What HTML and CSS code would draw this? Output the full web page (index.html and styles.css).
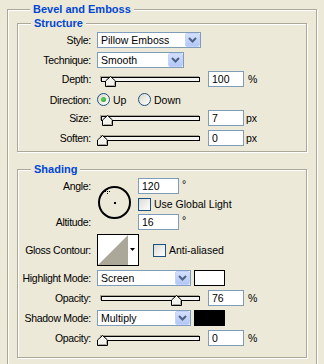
FILE: index.html
```html
<!DOCTYPE html>
<html lang="en">
<head>
    <meta charset="UTF-8">
    <title>Bevel and Emboss</title>
    <link rel="stylesheet" href="styles.css">
</head>
<body>
    <div class="panel">
        <div class="group outer">
            <div class="legend">Bevel and Emboss</div>

            <div class="group structure">
                <div class="legend">Structure</div>
                <div class="rows">
                    <div class="row">
                        <span class="label">Style:</span>
                        <div class="select w-style"><span class="value">Pillow Emboss</span><span class="drop"><svg width="9" height="6" viewBox="0 0 9 6"><polyline points="1,1 4.5,4.5 8,1" fill="none" stroke="#4D6185" stroke-width="2"/></svg></span></div>
                    </div>
                    <div class="row mt4">
                        <span class="label">Technique:</span>
                        <div class="select w-tech"><span class="value">Smooth</span><span class="drop"><svg width="9" height="6" viewBox="0 0 9 6"><polyline points="1,1 4.5,4.5 8,1" fill="none" stroke="#4D6185" stroke-width="2"/></svg></span></div>
                    </div>
                    <div class="row mt3">
                        <span class="label">Depth:</span>
                        <div class="slider"><div class="track"></div><svg class="thumb" style="left: 8px" width="11" height="11" viewBox="0 0 11 11"><polygon points="0.5,10.5 0.5,5 5.5,0.5 10.5,5 10.5,10.5" fill="#F4F3EE" stroke="#000"/><polyline points="1.5,9.5 9.5,9.5 9.5,5.5" fill="none" stroke="#ACA899"/></svg></div>
                        <div class="field">100</div><span class="unit">%</span>
                    </div>
                    <div class="row mt4 tall">
                        <span class="label">Direction:</span>
                        <span class="opt up"><span class="radio checked"></span>Up</span>
                        <span class="opt"><span class="radio"></span>Down</span>
                    </div>
                    <div class="row mt2">
                        <span class="label">Size:</span>
                        <div class="slider"><div class="track"></div><svg class="thumb" style="left: 5px" width="11" height="11" viewBox="0 0 11 11"><polygon points="0.5,10.5 0.5,5 5.5,0.5 10.5,5 10.5,10.5" fill="#F4F3EE" stroke="#000"/><polyline points="1.5,9.5 9.5,9.5 9.5,5.5" fill="none" stroke="#ACA899"/></svg></div>
                        <div class="field">7</div><span class="unit px">px</span>
                    </div>
                    <div class="row mt4">
                        <span class="label">Soften:</span>
                        <div class="slider"><div class="track"></div><svg class="thumb" style="left: 0px" width="11" height="11" viewBox="0 0 11 11"><polygon points="0.5,10.5 0.5,5 5.5,0.5 10.5,5 10.5,10.5" fill="#F4F3EE" stroke="#000"/><polyline points="1.5,9.5 9.5,9.5 9.5,5.5" fill="none" stroke="#ACA899"/></svg></div>
                        <div class="field">0</div><span class="unit px">px</span>
                    </div>
                </div>
            </div>

            <div class="group shading">
                <div class="legend">Shading</div>
                <div class="rows bottom">
                    <div class="angle-block">
                        <div class="label stack">
                            <span class="stack-item">Angle:</span>
                            <span class="stack-item">Altitude:</span>
                        </div>
                        <svg class="dial" width="35" height="35" viewBox="0 0 35 35">
                            <circle cx="17.5" cy="17.5" r="15.5" fill="none" stroke="#000" stroke-width="2"/>
                            <rect x="17" y="17" width="2" height="2" fill="#000"/>
                            <g fill="#000">
                                <rect x="10" y="4" width="1" height="1"/>
                                <rect x="10" y="8" width="1" height="1"/>
                                <rect x="8" y="6" width="1" height="1"/>
                                <rect x="12" y="6" width="1" height="1"/>
                                <rect x="10" y="6" width="1" height="1"/>
                            </g>
                        </svg>
                        <div class="stack-right">
                            <div class="row"><div class="field wide">120</div><span class="deg">°</span></div>
                            <div class="row"><span class="check"></span><span class="check-text">Use Global Light</span></div>
                            <div class="row"><div class="field wide">16</div><span class="deg">°</span></div>
                        </div>
                    </div>
                    <div class="row mt4 contour-row">
                        <span class="label">Gloss Contour:</span>
                        <svg class="contour" width="42" height="32" viewBox="0 0 42 32">
                            <rect x="0.5" y="0.5" width="41" height="31" fill="#fff" stroke="#000"/>
                            <polygon points="1,31 31,1 31,31" fill="#ACA899"/>
                            <polygon points="33,14 38,14 35.5,17" fill="#000"/>
                        </svg>
                        <span class="check aa"></span><span class="check-text">Anti-aliased</span>
                    </div>
                    <div class="row mt4">
                        <span class="label">Highlight Mode:</span>
                        <div class="select w-mode"><span class="value">Screen</span><span class="drop"><svg width="9" height="6" viewBox="0 0 9 6"><polyline points="1,1 4.5,4.5 8,1" fill="none" stroke="#4D6185" stroke-width="2"/></svg></span></div>
                        <span class="swatch white"></span>
                    </div>
                    <div class="row mt4">
                        <span class="label">Opacity:</span>
                        <div class="slider"><div class="track"></div><svg class="thumb" style="left: 74px" width="11" height="11" viewBox="0 0 11 11"><polygon points="0.5,10.5 0.5,5 5.5,0.5 10.5,5 10.5,10.5" fill="#F4F3EE" stroke="#000"/><polyline points="1.5,9.5 9.5,9.5 9.5,5.5" fill="none" stroke="#ACA899"/></svg></div>
                        <div class="field">76</div><span class="unit">%</span>
                    </div>
                    <div class="row mt4">
                        <span class="label">Shadow Mode:</span>
                        <div class="select w-mode"><span class="value">Multiply</span><span class="drop"><svg width="9" height="6" viewBox="0 0 9 6"><polyline points="1,1 4.5,4.5 8,1" fill="none" stroke="#4D6185" stroke-width="2"/></svg></span></div>
                        <span class="swatch black"></span>
                    </div>
                    <div class="row mt4">
                        <span class="label">Opacity:</span>
                        <div class="slider"><div class="track"></div><svg class="thumb" style="left: 0px" width="11" height="11" viewBox="0 0 11 11"><polygon points="0.5,10.5 0.5,5 5.5,0.5 10.5,5 10.5,10.5" fill="#F4F3EE" stroke="#000"/><polyline points="1.5,9.5 9.5,9.5 9.5,5.5" fill="none" stroke="#ACA899"/></svg></div>
                        <div class="field">0</div><span class="unit">%</span>
                    </div>
                </div>
            </div>
        </div>
    </div>
</body>
</html>
```

FILE: styles.css
```css
body {
    margin: 0;
    background: #ECE9D8;
    color: #000;
    font-family: "Liberation Sans", Arial, sans-serif;
    font-size: 10.5px;
}

.panel {
    padding: 9px 0 0 7px;
}

/* etched group boxes */
.group {
    border: 1px solid #ACA899;
    box-shadow: inset 1px 1px 0 #fff, 1px 1px 0 #fff;
}

.outer {
    width: 310px;
    box-sizing: border-box;
    padding: 0 9px 40px;
}

.legend {
    width: fit-content;
    height: 14px;
    line-height: 14px;
    margin: -8px 0 0 13px;
    padding: 0 3px;
    background: #ECE9D8;
    color: #0046D5;
    font-weight: bold;
    font-size: 11px;
}

.structure {
    margin-top: 7px;
}

.shading {
    margin-top: 17px;
}

.rows {
    display: flex;
    flex-direction: column;
    padding: 2px 0 5px;
}

.rows.bottom {
    padding-bottom: 11px;
}

.row {
    display: flex;
    align-items: center;
    height: 16px;
}

.row.tall {
    height: 17px;
}

.mt2 { margin-top: 2px; }
.mt3 { margin-top: 3px; }
.mt4 { margin-top: 4px; }

.label {
    flex: none;
    width: 73px;
    margin-right: 6px;
    text-align: right;
    white-space: nowrap;
    letter-spacing: -0.3px;
}

/* combo boxes */
.select {
    display: flex;
    align-items: center;
    height: 16px;
    box-sizing: border-box;
    border: 1px solid #7F9DB9;
    background: #fff;
    padding-left: 3px;
}

.select .value {
    flex: 1;
}

.w-style { width: 104px; }
.w-tech { width: 87px; }
.w-mode { width: 94px; }

.drop {
    display: flex;
    align-items: center;
    justify-content: center;
    width: 15px;
    height: 14px;
    box-sizing: border-box;
    border: 1px solid #C3D3FD;
    border-radius: 2px;
    background: linear-gradient(#D3E0FD, #B2C7F5);
}

/* sliders */
.slider {
    position: relative;
    width: 106px;
    height: 16px;
    flex: none;
}

.track {
    margin: 6px 3px 0 4px;
    height: 5px;
    box-sizing: border-box;
    border: 1px solid #000;
    box-shadow: -1px -1px 0 #ACA899;
    background: #F4F3EE;
}

.thumb {
    position: absolute;
    top: 5px;
}

.field {
    width: 36px;
    height: 16px;
    box-sizing: border-box;
    border: 1px solid #7F9DB9;
    background: #fff;
    padding-left: 3px;
    line-height: 14px;
    margin-left: 5px;
}

.field.wide {
    width: 41px;
    margin-left: 0;
}

.unit {
    margin-left: 4px;
}

.unit.px {
    margin-left: 2px;
}

.deg {
    align-self: flex-start;
    margin-left: 3px;
    line-height: 12px;
}

/* radio and check */
.opt {
    display: flex;
    align-items: center;
    gap: 3px;
}

.opt.up {
    width: 41px;
}

.radio {
    position: relative;
    width: 13px;
    height: 13px;
    box-sizing: border-box;
    border: 1px solid #1C5180;
    border-radius: 50%;
    background: linear-gradient(135deg, #DCD9CA, #fff);
}

.radio.checked::after {
    content: "";
    position: absolute;
    left: 3px;
    top: 3px;
    width: 5px;
    height: 5px;
    border-radius: 50%;
    background: radial-gradient(circle at 40% 40%, #5BD35B, #21A121);
}

.check {
    flex: none;
    width: 13px;
    height: 13px;
    box-sizing: border-box;
    border: 1px solid #1C5180;
    background: linear-gradient(135deg, #DCDBD5, #fff);
}

.check-text {
    margin-left: 3px;
    white-space: nowrap;
}

.check.aa {
    margin-left: 14px;
}

/* angle and altitude */
.angle-block {
    display: flex;
    height: 52px;
}

.stack {
    display: flex;
    flex-direction: column;
    justify-content: space-between;
}

.stack-item {
    height: 16px;
    line-height: 16px;
}

.dial {
    margin-top: 7px;
    flex: none;
}

.stack-right {
    display: flex;
    flex-direction: column;
    gap: 2px;
    margin-left: 6px;
}

.contour-row {
    height: 32px;
}

.contour {
    flex: none;
}

.swatch {
    width: 31px;
    height: 16px;
    box-sizing: border-box;
    border: 1px solid #000;
    margin-left: 3px;
}

.swatch.white { background: #fff; }
.swatch.black { background: #000; }
```
